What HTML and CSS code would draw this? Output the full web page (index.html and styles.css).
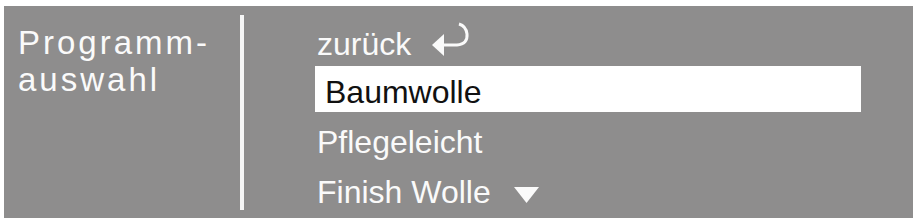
FILE: index.html
```html
<!DOCTYPE html>
<html>
<head>
  <title>Programmauswahl</title>
  <link rel="stylesheet" href="styles.css">
</head>
<body>
  <div class="display">
    <div class="title">Programm-<br>auswahl</div>
    <div class="divider"></div>
    <ul class="menu">
      <li class="item">zurück
        <svg class="back" width="40" height="36" viewBox="0 0 40 36">
          <polygon points="2,23 14,12 14,34" fill="#fafafa"/>
          <path d="M13 23 H27 Q38 22 37 12 Q36 4 29 2" fill="none" stroke="#fafafa" stroke-width="3"/>
        </svg>
      </li>
      <li class="item selected">Baumwolle</li>
      <li class="item">Pflegeleicht</li>
      <li class="item">Finish Wolle
        <svg class="more" width="25" height="16" viewBox="0 0 25 16">
          <polygon points="0,0 25,0 12.5,16" fill="#fafafa"/>
        </svg>
      </li>
    </ul>
  </div>
</body>
</html>
```

FILE: styles.css
```css
body {
  margin: 0;
  padding: 6px 2px 2px 4px;
  background: #ffffff;
  font-family: "Liberation Sans", Arial, sans-serif;
}
.display {
  display: flex;
  height: 212px;
  padding-left: 14px;
  background-color: #8e8d8d;
  color: #fafafa;
}
.title {
  width: 222px;
  padding-top: 18px;
  font-size: 33px;
  line-height: 37px;
  letter-spacing: 3px;
}
.divider {
  width: 4px;
  margin: 9px 0 8px 0;
  background-color: #f6f6f6;
}
.menu {
  list-style: none;
  margin: 0 0 0 71px;
  padding: 10px 0 0 0;
  display: flex;
  flex-direction: column;
  gap: 4px;
}
.item {
  width: 544px;
  height: 40px;
  padding: 6px 0 0 2px;
  font-size: 32px;
  line-height: 40px;
  white-space: nowrap;
}
.item.selected {
  width: 536px;
  padding-left: 10px;
  background-color: #ffffff;
  color: #111111;
}
.back {
  margin-left: 10px;
  vertical-align: -3px;
}
.more {
  margin-left: 14px;
  vertical-align: 0;
}
```
